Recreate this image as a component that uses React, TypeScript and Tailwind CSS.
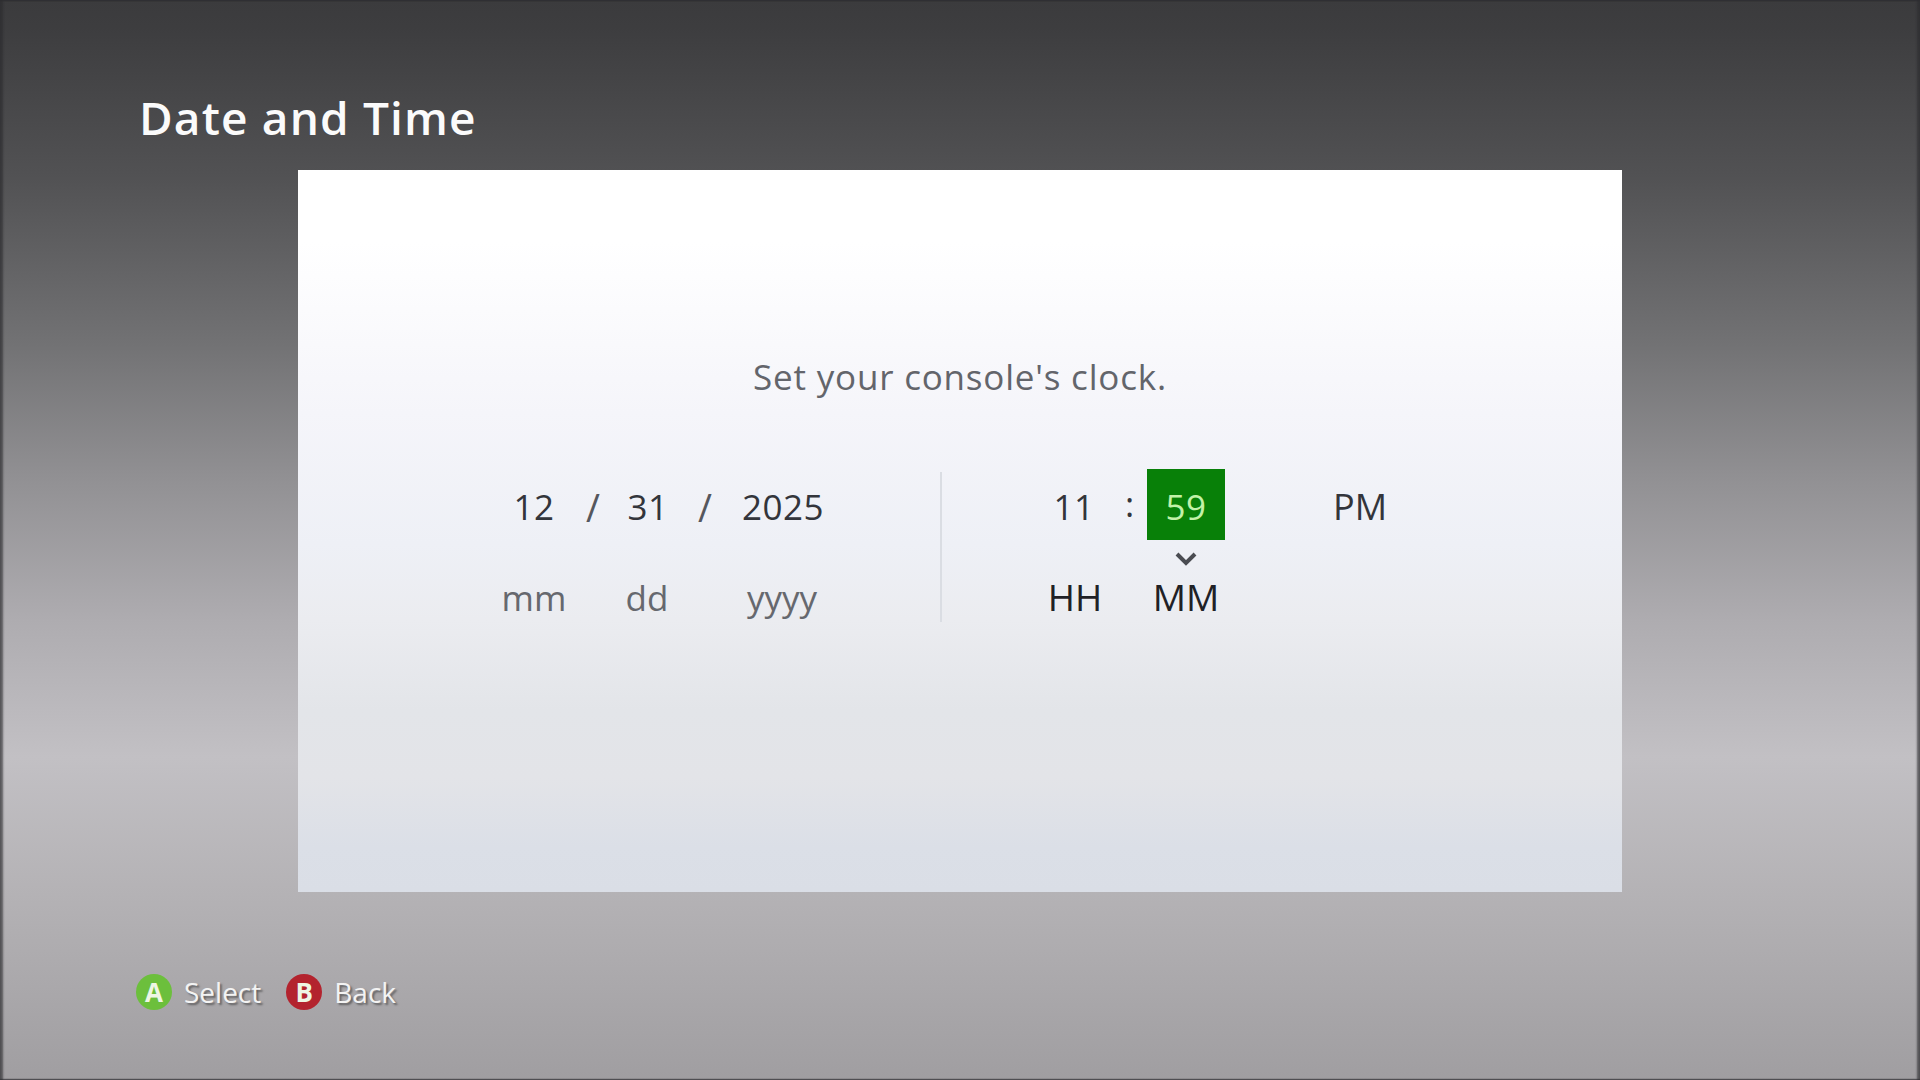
import React from "react";

const font = "font-['Open_Sans','Noto_Sans',sans-serif]";

function Hint({ letter, label, bg, ml }: { letter: string; label: string; bg: string; ml: string }) {
  return (
    <div className={`flex items-center ${ml}`}>
      <span className={`flex h-[36px] w-[36px] items-center justify-center rounded-full text-[26px] leading-none font-bold text-[#eef6e4] ${bg}`}>
        {letter}
      </span>
      <span className="ml-[12px] text-[28px] leading-[36px] text-[#f3f3f3] [text-shadow:2px_2px_2px_rgba(40,40,40,0.55)]">{label}</span>
    </div>
  );
}

export default function App() {
  return (
    <div className={`flex h-[1080px] w-[1920px] flex-col overflow-hidden bg-[linear-gradient(180deg,#3b3b3d_0px,#3d3d3f_27px,#525254_179px,#727274_344px,#929194_482px,#aeacb0_620px,#c2c0c4_757px,#b4b2b5_895px,#a5a3a6_1033px,#a09ea1_1080px)] shadow-[inset_3px_0_2px_rgba(45,45,48,0.65),inset_-3px_0_2px_rgba(45,45,48,0.65),inset_0_1px_1px_rgba(45,45,48,0.6),inset_0_-1px_1px_rgba(45,45,48,0.6)] ${font}`}>
      <h1 className="mt-[88px] ml-[139px] h-[52px] text-[46px] leading-[58px] font-semibold tracking-[1.15px] text-[#fbfbfb]">Date and Time</h1>
      <main className="mt-[30px] ml-[298px] flex h-[722px] w-[1324px] flex-col bg-[linear-gradient(180deg,#ffffff_0px,#ffffff_71px,#f5f5fa_243px,#eef0f6_374px,#ebecf0_450px,#e3e5e9_540px,#e3e4e8_608px,#dbdfe7_677px,#dadee6_722px)] pt-[182px]">
        <p className="h-[50px] text-center text-[35px] leading-[50px] tracking-[0.8px] text-[#63656b]">Set your console's clock.</p>
        <div className="mt-[67px] ml-[196px] flex items-start">
          <div className="grid grid-cols-[80px_38px_72px_42px_114px] pt-[6px] text-center">
            <span className="h-[64px] text-[35px] leading-[64px] tracking-[0.5px] text-[#33353b]">12</span>
            <span className="h-[64px] text-[38px] leading-[64px] text-[#55575d]">/</span>
            <span className="h-[64px] text-[35px] leading-[64px] tracking-[0.5px] text-[#33353b]">31</span>
            <span className="h-[64px] text-[38px] leading-[64px] text-[#55575d]">/</span>
            <span className="h-[64px] text-[35px] leading-[64px] tracking-[0.5px] text-[#33353b]">2025</span>
            <span className="mt-[34px] h-[50px] text-[35px] leading-[50px] text-[#66686e]">mm</span>
            <span />
            <span className="mt-[34px] h-[50px] pr-[2px] text-[35px] leading-[50px] text-[#66686e]">dd</span>
            <span />
            <span className="mt-[34px] h-[50px] pr-[2px] text-[35px] leading-[50px] text-[#66686e]">yyyy</span>
          </div>
          <div className="mt-[3px] ml-[100px] h-[150px] w-[2px] bg-[#dadde3]" />
          <div className="ml-[93px] grid grid-cols-[80px_32px_78px_108px_50px] text-center">
            <span className="h-[71px] pt-[6px] pr-[2px] text-[35px] leading-[64px] tracking-[0.5px] text-[#33353b]">11</span>
            <span className="h-[71px] pt-[3px] pr-[3px] text-[35px] leading-[64px] text-[#33353b]">:</span>
            <span className="h-[71px] bg-[#088008] pt-[6px] text-[35px] leading-[64px] tracking-[0.5px] text-[#c2f2a8]">59</span>
            <span />
            <span className="h-[71px] pt-[6px] text-[36px] leading-[64px] whitespace-nowrap text-[#33353b]">PM</span>
            <span className="mt-[32px] h-[50px] text-[37px] leading-[50px] text-[#1f2126]">HH</span>
            <span />
            <span className="relative mt-[32px] h-[50px] text-[37px] leading-[50px] whitespace-nowrap text-[#1f2126]">
              <span className="flex justify-center">MM</span>
              <svg className="absolute top-[-21px] left-[28px]" width="22" height="16" viewBox="0 0 22 16" fill="none">
                <path d="M2 3 L11 12 L20 3" stroke="#4a4c52" strokeWidth="4" />
              </svg>
            </span>
          </div>
        </div>
      </main>
      <footer className="mt-[82px] ml-[136px] flex">
        <Hint letter="A" label="Select" bg="bg-[#6cbf3c]" ml="" />
        <Hint letter="B" label="Back" bg="bg-[#b3232e]" ml="ml-[25px]" />
      </footer>
    </div>
  );
}
